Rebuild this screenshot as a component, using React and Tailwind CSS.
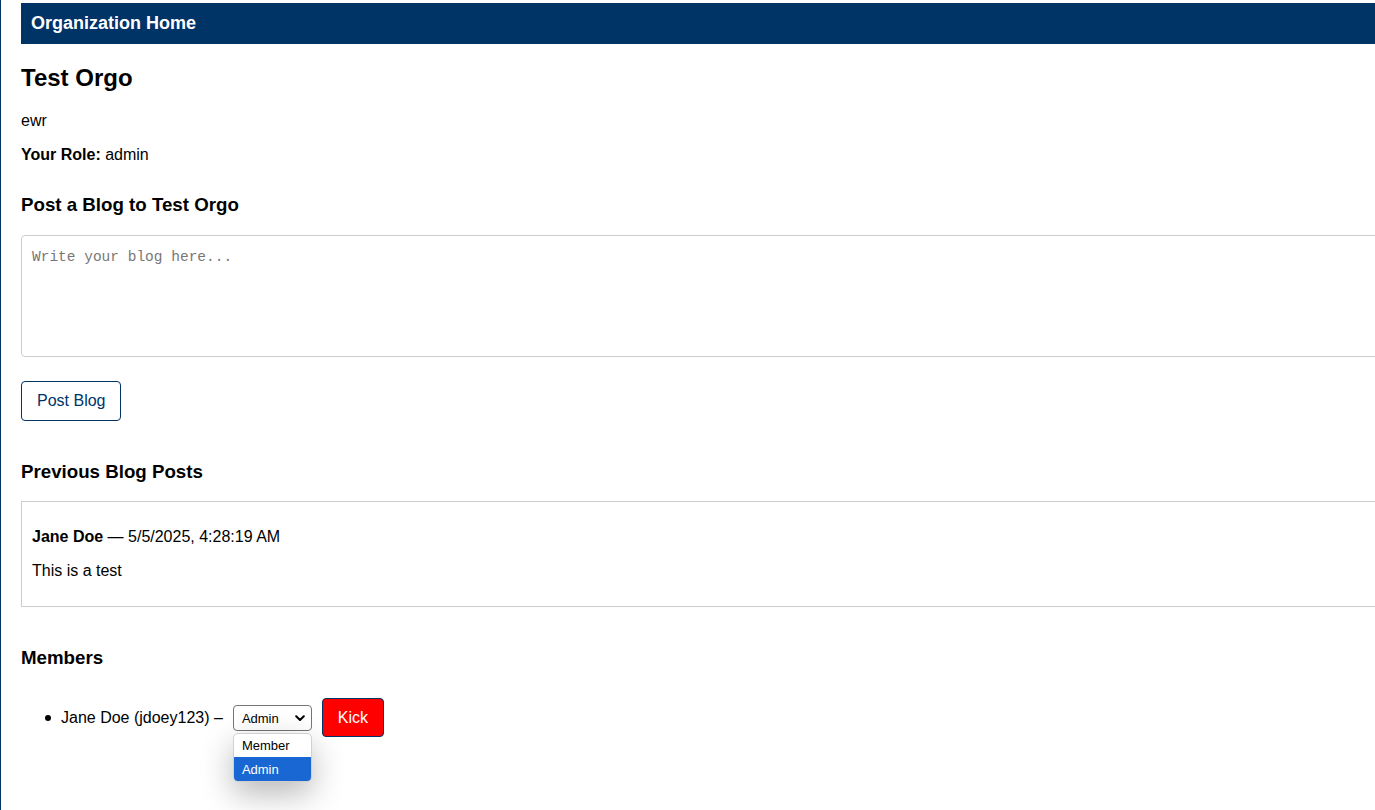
import React from "react";

export default function App() {
  return (
    <div className="w-full h-[810px] overflow-hidden bg-white text-black" style={{ fontFamily: '"Liberation Sans", Arial, sans-serif' }}>
      <div className="h-full border-l border-[#003366] pl-[20px] pt-[3px]">
        <div className="w-[1400px]">
          <div className="h-[41px] bg-[#003366] px-[10px] flex items-center text-white font-bold text-[18px] leading-[21px]">
            Organization Home
          </div>

          <h2 className="mt-[20px] text-[24px] font-bold leading-[28px]">Test Orgo</h2>
          <p className="mt-[20px] text-[16px] leading-[18px]">ewr</p>
          <p className="mt-[16px] text-[16px] leading-[18px]">
            <span className="font-bold">Your Role:</span> admin
          </p>

          <h3 className="mt-[30px] text-[18.72px] font-bold leading-[22px]">Post a Blog to Test Orgo</h3>
          <textarea
            className="mt-[19px] block w-[1380px] h-[122px] border border-[#cccccc] rounded-[4px] px-[10px] pt-[12px] pb-[10px] text-[14.5px] leading-[18px] placeholder:text-[#777777] resize-none outline-none"
            style={{ fontFamily: '"Liberation Mono", "DejaVu Sans Mono", monospace' }}
            placeholder="Write your blog here..."
          />
          <button className="mt-[24px] block h-[40px] px-[15px] border border-[#003366] rounded-[4px] bg-white text-[#003366] text-[16px] leading-[18px]">
            Post Blog
          </button>

          <h3 className="mt-[40px] text-[18.72px] font-bold leading-[22px]">Previous Blog Posts</h3>
          <div className="mt-[18px] w-[1380px] border border-[#cccccc] px-[10px] pt-[10px] pb-[10px]">
            <p className="mt-[16px] text-[16px] leading-[18px]">
              <span className="font-bold">Jane Doe</span> — 5/5/2025, 4:28:19 AM
            </p>
            <p className="mt-[16px] mb-[16px] text-[16px] leading-[18px]">This is a test</p>
          </div>

          <h3 className="mt-[40px] text-[18.72px] font-bold leading-[22px]">Members</h3>
          <ul className="mt-[29px]">
            <li className="flex items-center h-[39px] text-[16px] leading-[18px]">
              <span className="ml-[24px] w-[6px] h-[6px] rounded-full bg-black" />
              <span className="ml-[10px]">Jane Doe (jdoey123) –</span>
              <div className="relative ml-[10px] mt-[1px]">
                <div className="w-[79px] h-[26px] border border-[#767676] rounded-[4px] bg-white flex items-center pl-[8px] pr-[5px] text-[13px] leading-[15px]">
                  <span className="flex-1">Admin</span>
                  <svg width="10" height="7" viewBox="0 0 10 7" className="mr-[1px]">
                    <path d="M1.2 1.2 L5 5 L8.8 1.2" fill="none" stroke="#000" strokeWidth="2" strokeLinecap="round" strokeLinejoin="round" />
                  </svg>
                </div>
                <div className="absolute left-0 top-[28px] w-[79px] rounded-[5px] border border-[#d0d0d0] bg-white overflow-hidden shadow-[0_12px_32px_rgba(0,0,0,0.28)] text-[13px] leading-[15px]">
                  <div className="h-[23px] flex items-center pl-[8px]">Member</div>
                  <div className="h-[24px] flex items-center pl-[8px] bg-[#1967d2] text-white">Admin</div>
                </div>
              </div>
              <button className="ml-[10px] w-[62px] h-[39px] border border-[#003366] rounded-[4px] bg-[#ff0000] text-white text-[16px] leading-[18px]">
                Kick
              </button>
            </li>
          </ul>
        </div>
      </div>
    </div>
  );
}
